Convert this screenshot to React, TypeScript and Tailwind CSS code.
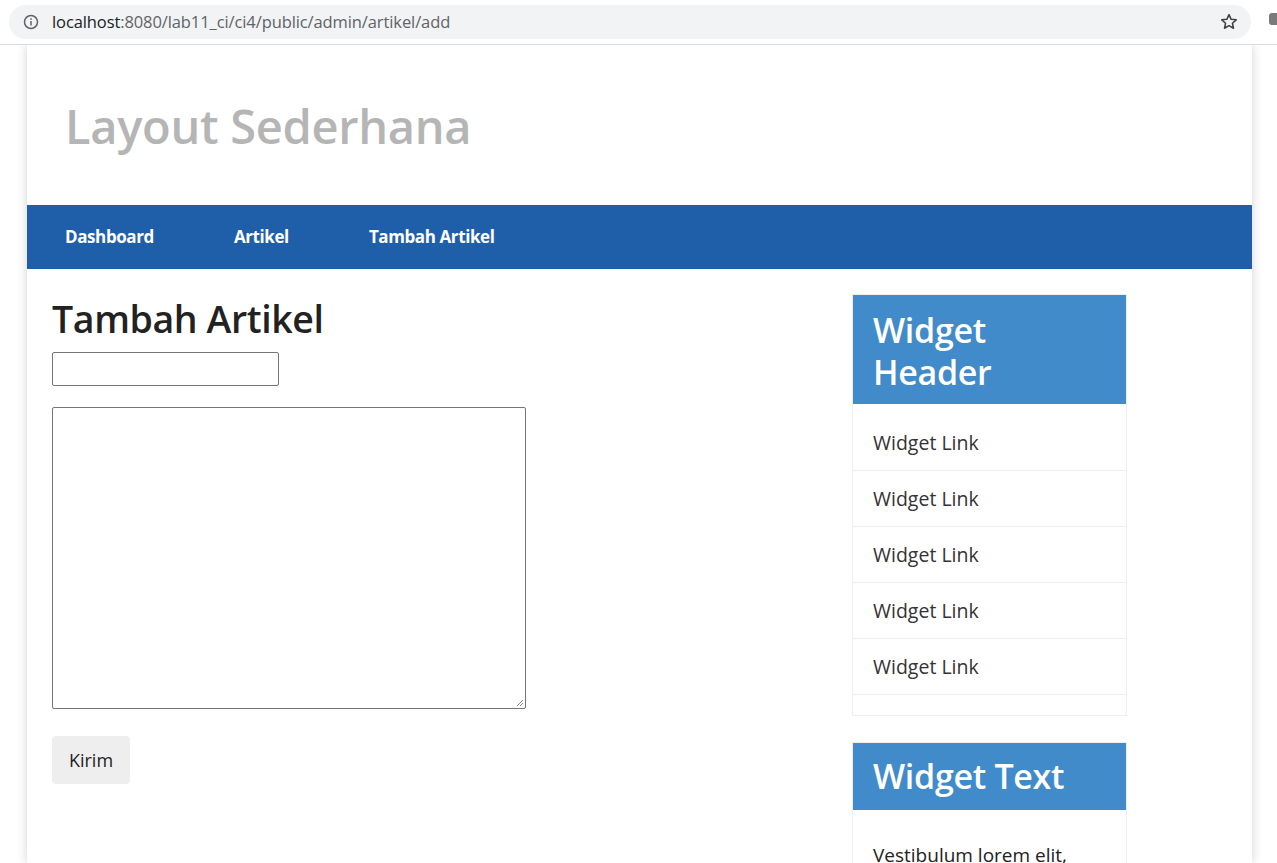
import React from "react";

const font = { fontFamily: '"Open Sans", "Noto Sans", sans-serif' };

function Links() {
  const items = [1, 2, 3, 4, 5];
  return (
    <ul className="pt-[11px] pb-[20px]">
      {items.map((i) => (
        <li key={i} className="h-[56px] flex items-center px-[20px] border-b border-[#eeeeee] text-[19.5px] text-[#333333]">
          Widget Link
        </li>
      ))}
    </ul>
  );
}

export default function App() {
  return (
    <div className="w-[1277px] h-[863px] overflow-hidden bg-white" style={font}>
      {/* browser bar */}
      <div className="h-[45px] bg-white border-b border-[#dadce0] flex items-center pl-[9px] relative">
        <div className="w-[1242px] h-[34px] rounded-full bg-[#f1f3f4] flex items-center pl-[14px] pr-[12px]">
          <svg width="16" height="16" viewBox="0 0 16 16" className="shrink-0">
            <circle cx="8" cy="8" r="6.5" fill="none" stroke="#5f6368" strokeWidth="1.5" />
            <rect x="7.25" y="7" width="1.5" height="4.5" fill="#5f6368" />
            <rect x="7.25" y="4.2" width="1.5" height="1.6" fill="#5f6368" />
          </svg>
          <div className="ml-[13px] text-[16.5px] tracking-[-0.1px]" style={font}>
            <span className="text-[#202124]">localhost</span>
            <span className="text-[#5f6368]">:8080/lab11_ci/ci4/public/admin/artikel/add</span>
          </div>
          <div className="ml-auto">
            <svg width="20" height="20" viewBox="0 0 24 24" fill="none" stroke="#3c4043" strokeWidth="1.8" strokeLinejoin="round">
              <path d="M12 3.2l2.6 5.6 6.1.6-4.6 4.1 1.3 6-5.4-3.1-5.4 3.1 1.3-6-4.6-4.1 6.1-.6z" />
            </svg>
          </div>
        </div>
        <div className="absolute right-[-6px] top-[13px] w-[14px] h-[12px] rounded-[3px] bg-[#7a7a7a]" />
      </div>

      {/* page */}
      <div className="bg-white flex">
        <div className="ml-[27px] w-[1225px] bg-white shadow-[0_0_10px_rgba(0,0,0,0.18)] h-[818px]">
          <header className="h-[160px] flex items-center px-[38px]">
            <h1 className="text-[47px] font-semibold text-[#b5b5b5] leading-none tracking-[-0.3px] mt-[2px]">Layout Sederhana</h1>
          </header>
          <nav className="h-[64px] bg-[#1f5faa] flex items-center pl-[38px]">
            <a className="text-white font-bold text-[17px] tracking-[-0.4px] mr-[80px]">Dashboard</a>
            <a className="text-white font-bold text-[17px] tracking-[-0.4px] mr-[80px]">Artikel</a>
            <a className="text-white font-bold text-[17px] tracking-[-0.4px]">Tambah Artikel</a>
          </nav>
          <div className="flex">
            <section className="w-[800px] pl-[25px] pt-[27px]">
              <h2 className="text-[37.5px] font-semibold text-[#222222] leading-[1.2] tracking-[-0.4px]">Tambah Artikel</h2>
              <div className="mt-[11px] w-[227px] h-[34px] border border-[#767676] rounded-[2px]" />
              <div className="mt-[21px] w-[474px] h-[302px] border border-[#767676] rounded-[2px] relative">
                <svg width="9" height="9" viewBox="0 0 9 9" className="absolute right-[1px] bottom-[1px]">
                  <path d="M8 2L2 8M8 5L5 8" stroke="#888" strokeWidth="1" />
                </svg>
              </div>
              <div className="mt-[27px] w-[78px] h-[48px] bg-[#eeeeee] rounded-[4px] flex items-center justify-center text-[18px] text-[#222]">
                Kirim
              </div>
            </section>
            <aside className="ml-[25px] pt-[25px] w-[275px]">
              <div className="border border-[#eeeeee]">
                <div className="bg-[#428bca] h-[109px] px-[20px] pt-[14px] text-white text-[34px] font-semibold leading-[42px] tracking-[-0.3px]">
                  Widget<br />Header
                </div>
                <Links />
              </div>
              <div className="mt-[26px] border border-[#eeeeee]">
                <div className="bg-[#428bca] h-[67px] px-[20px] flex items-center text-white text-[34px] font-semibold tracking-[-0.3px]">
                  Widget Text
                </div>
                <p className="px-[20px] pt-[31px] text-[19px] text-[#222]">Vestibulum lorem elit,</p>
              </div>
            </aside>
          </div>
        </div>
      </div>
    </div>
  );
}
